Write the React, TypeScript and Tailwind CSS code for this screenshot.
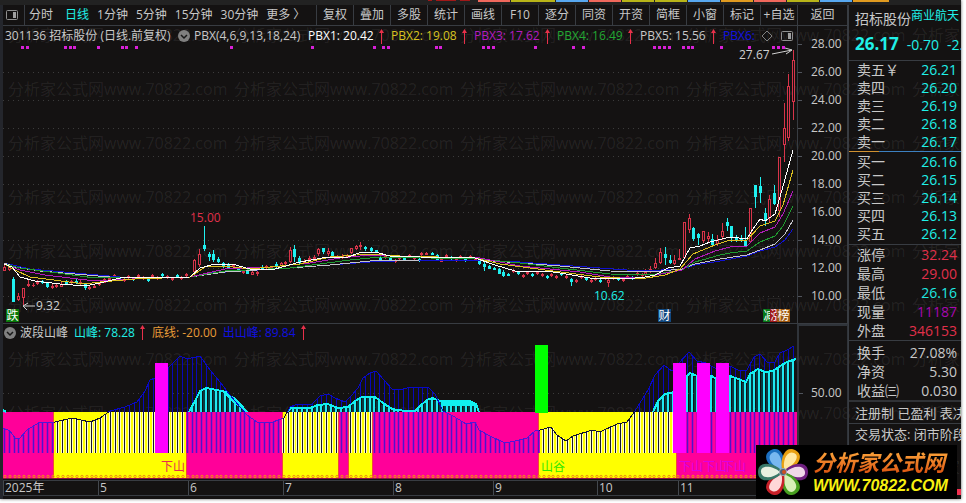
import React from 'react';
import clsx from 'clsx';

type Point = [number, number];
// x, high, body top, body bottom, low, rising
type Candle = [number, number, number, number, number, boolean];

const STEP = 4.81;

const periods = ['分时', '日线', '1分钟', '5分钟', '15分钟', '30分钟', '更多 〉'];
const tools = ['复权', '叠加', '多股', '统计', '画线', 'F10', '逐分', '同资', '开资', '简框', '小窗', '标记', '+自选'];

const indicators = [
  { name: 'PBX1: 20.42', color: 'text-white' },
  { name: 'PBX2: 19.08', color: 'text-[#d8c420]' },
  { name: 'PBX3: 17.62', color: 'text-[#b41cc0]' },
  { name: 'PBX4: 16.49', color: 'text-[#22a832]' },
  { name: 'PBX5: 15.56', color: 'text-[#c8c8c8]' },
];

const prices = ['28.00', '26.00', '24.00', '22.00', '20.00', '18.00', '16.00', '14.00', '12.00', '10.00'];

const sells = [['卖五￥', '26.21'], ['卖四', '26.20'], ['卖三', '26.19'], ['卖二', '26.18'], ['卖一', '26.17']];
const buys = [['买一', '26.16'], ['买二', '26.15'], ['买三', '26.14'], ['买四', '26.13'], ['买五', '26.12']];
const stats = [
  ['涨停', '32.24', 'text-[#e0304a]'],
  ['最高', '29.00', 'text-[#e0304a]'],
  ['最低', '26.16', 'text-[#20e8e0]'],
  ['现量', '11187', 'text-[#a808b0]'],
  ['外盘', '346153', 'text-[#e0304a]'],
];
const ratios = [['换手', '27.08%'], ['净资', '5.30'], ['收益㈢', '0.030']];

const tabs = [
  'w-8 bg-[#f0685c]', 'w-11 bg-[#b8b418]', 'w-8 bg-[#58a8f0]', 'w-8 bg-[#f0685c]', 'w-8 bg-[#b8b418]', 'w-8 bg-[#b8b418]',
  'w-8 bg-[#58a8f0]', 'w-8 bg-[#e09a20]', 'w-8 bg-[#f0685c]', 'w-8 bg-[#b8b418]', 'w-8 bg-[#58a8f0]', 'w-9 bg-[#e09a20]',
];

const signals = [
  22, 27, 65, 70, 74, 98, 122, 126, 136, 231, 312, 374, 383, 388, 436, 440, 483, 488, 493, 535, 573, 583,
  654, 659, 664, 669, 683, 688, 692, 721, 749, 773, 778, 783,
];

const candles: Candle[] = [
  [4, 265, 267, 271, 271, true], [9, 265, 266, 270, 271, true], [13, 277, 279, 302, 302, false],
  [18, 293, 296, 300, 301, true], [23, 288, 288, 298, 305, true], [28, 280, 284, 286, 287, true],
  [33, 283, 285, 286, 287, true], [37, 280, 282, 284, 285, true], [42, 280, 281, 283, 284, false],
  [47, 282, 283, 287, 288, false], [52, 284, 286, 288, 289, true], [56, 284, 285, 287, 288, true],
  [61, 282, 284, 287, 287, true], [66, 280, 281, 284, 284, false], [71, 280, 281, 283, 284, true],
  [76, 279, 281, 283, 284, false], [80, 280, 282, 284, 286, true], [85, 283, 284, 288, 290, false],
  [89, 286, 287, 289, 290, true], [94, 285, 286, 288, 288, true], [99, 282, 283, 285, 286, true],
  [104, 277, 279, 283, 283, true], [109, 276, 278, 280, 281, true],
  [194, 259, 260, 272, 272, true], [199, 249, 254, 265, 267, true], [204, 226, 245, 249, 251, false],
  [209, 252, 254, 257, 261, false], [213, 250, 254, 260, 262, false], [218, 257, 259, 262, 263, false],
  [223, 262, 263, 267, 268, false], [228, 263, 265, 269, 269, false], [247, 270, 271, 274, 274, false],
  [252, 270, 272, 275, 275, true], [257, 270, 272, 274, 276, true], [262, 265, 267, 269, 270, false],
  [266, 265, 266, 268, 269, true], [271, 266, 267, 269, 269, true], [276, 262, 264, 267, 268, false],
  [281, 262, 263, 266, 267, true], [285, 261, 262, 264, 265, true], [290, 247, 250, 262, 263, true],
  [294, 245, 249, 257, 262, false], [299, 256, 258, 263, 264, false], [304, 259, 261, 263, 264, true],
  [309, 256, 258, 260, 261, true], [314, 255, 257, 259, 260, true], [318, 248, 249, 254, 256, true],
  [323, 248, 248, 252, 254, false], [328, 248, 251, 254, 256, true], [332, 251, 252, 258, 258, false],
  [337, 255, 256, 258, 259, true], [342, 254, 256, 258, 259, true], [347, 254, 255, 257, 258, true],
  [351, 248, 248, 253, 254, true], [356, 245, 246, 249, 250, true], [360, 242, 245, 247, 250, true],
  [365, 246, 247, 249, 251, false], [371, 247, 248, 251, 252, false], [376, 250, 250, 252, 253, false],
  [380, 255, 257, 260, 261, false], [421, 252, 253, 255, 256, true], [426, 252, 253, 255, 255, true],
  [432, 252, 253, 255, 255, false], [437, 254, 255, 261, 261, false], [441, 258, 259, 262, 262, true],
  [479, 258, 258, 264, 265, false], [484, 261, 264, 267, 271, false], [489, 265, 266, 269, 269, false],
  [494, 267, 268, 270, 270, false], [499, 268, 269, 274, 274, false], [503, 270, 272, 276, 277, false],
  [508, 273, 274, 276, 276, false], [571, 278, 279, 282, 286, false], [576, 279, 280, 282, 283, true],
  [608, 279, 280, 283, 287, true], [645, 269, 272, 275, 276, true], [650, 266, 269, 271, 273, true],
  [655, 258, 263, 268, 269, true], [660, 248, 252, 263, 264, true], [665, 247, 254, 258, 265, false],
  [670, 255, 260, 263, 264, false], [674, 255, 260, 264, 265, true], [679, 249, 258, 260, 260, true],
  [684, 222, 222, 258, 258, true], [689, 214, 218, 230, 233, true], [693, 227, 228, 239, 241, false],
  [698, 233, 234, 238, 245, false], [703, 231, 231, 241, 243, true], [708, 232, 236, 239, 242, true],
  [712, 234, 239, 245, 247, false], [717, 235, 240, 244, 246, true], [722, 223, 231, 237, 240, true],
  [727, 218, 222, 226, 231, false], [731, 226, 226, 238, 242, false], [736, 235, 237, 240, 242, false],
  [741, 235, 238, 241, 242, false], [745, 227, 240, 246, 246, false], [750, 208, 208, 242, 242, true],
  [755, 185, 185, 197, 208, false], [760, 177, 186, 193, 203, false], [765, 208, 213, 220, 226, false],
  [769, 195, 199, 218, 222, true], [774, 185, 193, 204, 205, false], [779, 157, 157, 211, 217, true],
  [784, 103, 128, 145, 162, true], [788, 74, 86, 138, 141, true], [793, 50, 60, 102, 120, true],
];

// sideways stretches: from x, to x, start y, end y
const flats: [number, number, number, number][] = [
  [114, 190, 278, 277], [233, 245, 268, 270], [385, 420, 259, 258], [446, 478, 258, 259],
  [513, 569, 273, 277], [581, 606, 279, 280], [613, 643, 280, 275],
];

flats.forEach(([from, to, y0, y1]) => {
  for (let x = from, i = 0; x < to; x += STEP, i++) {
    const y = Math.round(y0 + ((y1 - y0) * (x - from)) / (to - from) + ((i * 7) % 5) - 3);
    candles.push([Math.round(x), y - 1, y, y + 2, y + 3, i % 3 !== 1]);
  }
});

const averages: { color: string; points: string }[] = [
  { color: '#1010d0', points: '4,263 30,269 75,273 120,277 190,277 210,273 290,268 330,265 370,262 420,260 480,260 520,262 560,265 600,268 640,271 682,269 695,265 720,261 747,256 760,251 775,247 785,240 793,229' },
  { color: '#c4c4cc', points: '4,263 15,267 40,271 110,277 190,277 225,272 290,268 330,265 370,261 420,260 480,260 520,263 560,266 610,271 650,272 682,269 695,264 720,259 747,255 760,250 775,244 785,234 793,220' },
  { color: '#1f9a30', points: '4,264 20,268 50,272 95,278 190,277 225,271 290,268 320,264 350,260 380,257 480,259 520,263 560,268 610,274 650,275 682,270 695,262 720,255 730,253 747,251 760,242 775,236 783,226 793,206' },
  { color: '#b01cb8', points: '4,264 20,270 45,275 95,281 150,278 190,277 225,269 270,267 310,263 340,258 370,255 420,257 480,258 520,266 580,272 610,277 645,277 682,270 695,259 715,251 730,247 747,246 760,233 775,227 783,214 793,191' },
  { color: '#dcc020', points: '4,264 15,270 30,277 85,284 100,282 135,279 190,277 205,267 225,266 250,269 300,264 330,257 370,254 400,256 475,258 500,264 545,270 600,277 640,279 665,275 680,269 693,254 715,245 730,240 747,240 760,226 775,221 783,205 793,170' },
  { color: '#ffffff', points: '4,264 12,267 20,277 35,281 60,284 85,286 100,283 120,278 190,277 200,268 215,264 232,264 250,269 275,269 300,262 328,257 345,258 362,252 375,252 390,256 420,257 475,258 495,265 515,271 545,271 560,273 590,278 625,279 645,277 655,275 668,268 680,266 690,248 700,246 710,242 730,237 747,239 753,229 760,219 765,221 775,214 782,190 793,150' },
];

const wave: Point[] = [
  [3, 428], [10, 431], [15, 438], [19, 439], [27, 430], [40, 422], [55, 422], [72, 418], [90, 422], [100, 418], [110, 411],
  [125, 407], [137, 402], [145, 391], [150, 380], [155, 378], [168, 368], [180, 356], [187, 359], [200, 356], [210, 370],
  [220, 382], [230, 395], [240, 407], [247, 415], [257, 422], [270, 423], [284, 418], [290, 407], [295, 405], [312, 404],
  [320, 396], [328, 394], [335, 398], [345, 402], [352, 395], [358, 388], [363, 378], [370, 373], [376, 371], [384, 380],
  [392, 389], [400, 390], [410, 387], [428, 387], [435, 394], [443, 411], [453, 416], [463, 422], [466, 424], [475, 422],
  [479, 430], [490, 436], [505, 443], [515, 441], [527, 438], [535, 431], [540, 430], [551, 427], [557, 435], [566, 441],
  [573, 436], [592, 430], [600, 432], [617, 424], [627, 422], [633, 414], [640, 403], [648, 390], [655, 375], [664, 365],
  [672, 371], [679, 363], [689, 352], [697, 361], [706, 363], [720, 371], [730, 366], [740, 371], [747, 370], [754, 357],
  [760, 354], [768, 363], [775, 362], [780, 353], [787, 350], [794, 346],
];

const peaks: Point[][] = [
  [[3, 410], [6, 412]],
  [[189, 412], [195, 401], [200, 391], [206, 388], [222, 391], [226, 392], [230, 396], [240, 404], [247, 412]],
  [
    [288, 411], [291, 408], [310, 408], [318, 405], [328, 404], [338, 408], [348, 407], [355, 401], [362, 397], [375, 397],
    [383, 403], [392, 409], [405, 411], [415, 411], [420, 406], [427, 400], [432, 398], [440, 401], [470, 401], [476, 404], [479, 412],
  ],
  [
    [653, 412], [658, 401], [665, 394], [679, 391], [683, 379], [690, 373], [697, 376], [712, 376], [716, 379], [730, 376],
    [738, 379], [746, 382], [750, 374], [758, 369], [765, 372], [773, 371], [780, 366], [787, 362], [796, 359],
  ],
];

const bands: [number, number, boolean][] = [
  [3, 54, false], [54, 187, true], [187, 283, false], [283, 339, true], [339, 349, false],
  [349, 373, true], [373, 539, false], [539, 677, true], [677, 797, false],
];

const months = [
  { label: '2025年', width: 'w-[95px]' },
  { label: '5', width: 'w-[90px]' },
  { label: '6', width: 'w-[95px]' },
  { label: '7', width: 'w-[110px]' },
  { label: '8', width: 'w-[100px]' },
  { label: '9', width: 'w-[104px]' },
  { label: '10', width: 'w-[81px]' },
  { label: '11', width: 'flex-1' },
];

const xs = Array.from({ length: 165 }, (_, i) => Math.round(4 + i * STEP));

const valueAt = (points: Point[], x: number): number => {
  for (let i = 1; i < points.length; i++) {
    const [x0, y0] = points[i - 1];
    const [x1, y1] = points[i];
    if (x <= x1) return Math.round(y0 + ((y1 - y0) * (x - x0)) / (x1 - x0));
  }
  return points[points.length - 1][1];
};

const isYellow = (x: number) => bands.some(([from, to, yellow]) => yellow && x >= from && x < to);
const toPoints = (points: Point[]) => points.map(p => p.join(',')).join(' ');

const RiseArrow: React.FC = () => (
  <svg className="w-[7px] h-[15px] shrink-0" viewBox="0 0 7 15" fill="#e8304a">
    <path d="M3 3h1v12H3zM3.500 0L6 4H1z" />
  </svg>
);

const Collapse: React.FC = () => (
  <svg className="w-3 h-3 shrink-0" viewBox="0 0 12 12">
    <circle cx="6" cy="6" r="6" fill="#808080" />
    <path d="M3 5l3 3 3-3" fill="none" stroke="#181818" strokeWidth="1.500" />
  </svg>
);

const PaneIcon: React.FC = () => (
  <svg className="w-3 h-3 shrink-0" viewBox="0 0 12 12">
    <rect x="0.500" y="1.500" width="11" height="9" rx="1" fill="none" stroke="#909090" />
    <rect x="7" y="3" width="3" height="6" fill="#a0a0a0" />
  </svg>
);

const Badge: React.FC<{ x: number; text: string; fill: string; width?: number }> = ({ x, text, fill, width = 13 }) => (
  <g>
    <rect x={x} y="309" width={width} height="13" fill={fill} />
    <text x={x + width / 2} y="320" fontSize="12" textAnchor="middle" fill="#fff">{text}</text>
  </g>
);

const PriceChart: React.FC = () => (
  <svg className="block w-full h-[279px]" viewBox="3 44 794 279" shapeRendering="crispEdges">
    {prices.slice(1).map((p, i) => (
      <path key={p} d={`M3 ${72.5 + i * 28}H797`} stroke="#3c3c3c" strokeDasharray="1 4" />
    ))}
    {signals.map(x => <rect key={x} x={x - 1} y="46" width="3" height="3" fill="#d820d8" />)}
    {candles.map(([x, high, top, bottom, low, up]) => {
      const color = up ? '#d8344a' : '#20f0f0';
      return (
        <g key={x}>
          <rect x={x} y={high} width="1" height={low - high} fill={color} />
          <rect x={x - 1} y={top} width="3" height={Math.max(bottom - top, 1)} fill={color} />
          {up && bottom - top > 2 && <rect x={x} y={top + 1} width="1" height={bottom - top - 2} fill="#141212" />}
        </g>
      );
    })}
    {averages.map(a => <polyline key={a.color} points={a.points} fill="none" stroke={a.color} strokeWidth="1" />)}
    <g fill="none" stroke="#d0d0d0" shapeRendering="auto">
      <path d="M772 54L792 50M785 48l7 2-6 4" />
      <path d="M23 306H35M28 303l-5 3 4 4" />
    </g>
    <g fontSize="12">
      <text x="739" y="59" fill="#d0d0d0">27.67</text>
      <text x="36" y="310" fill="#d0d0d0">9.32</text>
      <text x="190" y="222" fill="#e0304a">15.00</text>
      <text x="594" y="300" fill="#20f0e8">10.62</text>
    </g>
    <Badge x={6} text="跌" fill="#087808" />
    <Badge x={658} text="财" fill="#104880" />
    <Badge x={763} text="减" fill="#087818" />
    <Badge x={770} text="涨" fill="#a01818" />
    <Badge x={777} text="榜" fill="#a05810" />
  </svg>
);

const WaveChart: React.FC = () => (
  <svg className="block w-full h-[139px]" viewBox="3 341 794 139" shapeRendering="crispEdges">
    <path d="M3 393.500H797" stroke="#3c3c3c" strokeDasharray="1 4" />
    {bands.map(([from, to, yellow]) => (
      <rect key={from} x={from} y="412" width={to - from} height="67" fill={yellow ? '#ffff00' : '#ff0099'} />
    ))}
    {bands.slice(1).map(([from]) => <rect key={from} x={from - 1} y="412" width="1" height="67" fill="#f04838" />)}
    {xs.map(x => {
      const y = valueAt(wave, x);
      const base = Math.max(y, 412);
      const yellow = isYellow(x);
      return (
        <g key={x}>
          <rect x={x - 1} y={base} width="3" height={453 - base} fill={yellow ? '#ffffc0' : '#d000b4'} />
          <rect x={x} y={base} width="1" height={453 - base} fill={yellow ? '#181830' : '#5014c8'} />
          {y < 412 && <rect x={x} y={y} width="1" height={412 - y} fill="#0808b8" />}
        </g>
      );
    })}
    {peaks.map((peak, i) => (
      <g key={i}>
        {xs.filter(x => x >= peak[0][0] && x <= peak[peak.length - 1][0]).map(x => {
          const y = valueAt(peak, x);
          return (
            <g key={x}>
              <rect x={x - 3} y={y + 1} width="4" height={Math.max(412 - y - 1, 0)} fill="#043c44" />
              <rect x={x - 1} y={y} width="2" height={412 - y} fill="#20e8f0" />
            </g>
          );
        })}
        <polyline points={toPoints(peak)} fill="none" stroke="#10f0f0" strokeWidth="2" />
      </g>
    ))}
    {/* the falling side of the last hump before September stays solid */}
    <path d="M441 400H468L476 403V406H441zM222 391L236 398 247 412 232 402z" fill="#10f0f0" />
    {bands.map(([from, to, yellow]) => (
      <g key={from}>
        <clipPath id={`band-${from}`}><rect x={from} y="412" width={to - from} height="42" /></clipPath>
        <polyline clipPath={`url(#band-${from})`} points={toPoints(wave)} fill="none" stroke={yellow ? '#101030' : '#5018d8'} />
      </g>
    ))}
    <clipPath id="above"><rect x="3" y="341" width="794" height="71" /></clipPath>
    <polyline clipPath="url(#above)" points={toPoints(wave)} fill="none" stroke="#0808c8" />
    {[155, 673, 697, 716].map(x => <rect key={x} x={x} y="363" width="13" height="90" fill="#ff00ff" />)}
    <rect x="535" y="345" width="13" height="68" fill="#00ff00" />
    <g fontSize="12">
      <text x="161" y="471" fill="#e82c50">下山</text>
      <text x="541" y="471" fill="#30e800">山谷</text>
      <text x="679" y="471" fill="#d800e8">下山</text>
      <text x="703" y="471" fill="#d800e8">下山</text>
      <text x="722" y="471" fill="#d800e8">下山</text>
    </g>
    <g fill="none" stroke="#f09010" shapeRendering="auto">
      {xs.map(x => <circle key={x} cx={x + 1} cy="476.500" r="1.200" />)}
    </g>
    <rect x="3" y="478" width="794" height="1" fill="#901040" />
  </svg>
);

const petals = [
  { angle: -30, color: '#1c70c0', inner: '#78b8f0' },
  { angle: 30, color: '#e8a010', inner: '#ffe8a0' },
  { angle: 90, color: '#702080', inner: '#f0d8e8' },
  { angle: 150, color: '#48a020', inner: '#d8f0b8' },
  { angle: 210, color: '#c82028', inner: '#ffd8d8' },
  { angle: 270, color: '#387868', inner: '#e8f0e0' },
];

const Brand: React.FC = () => (
  <a
    href="#home"
    className="absolute right-1 bottom-0 flex items-center gap-1 w-[201px] h-[54px] pl-px bg-black font-bold italic"
  >
    <svg className="w-[52px] h-[52px] shrink-0" viewBox="-26 -26 52 52">
      {petals.map(p => (
        <g key={p.angle} transform={`rotate(${p.angle})`}>
          <path d="M0 0C-9 -7 -13 -25 0 -25S9 -7 0 0z" fill={p.color} />
          <path d="M0 -3C-6 -9 -8 -21 0 -22S6 -9 0 -3z" fill={p.inner} />
        </g>
      ))}
      <circle r="4" fill="#a0a8b0" />
      <circle r="3" fill="#506078" />
      <circle cx="1" r="2" fill="#d05020" />
    </svg>
    <span className="flex flex-col whitespace-nowrap">
      <span className="text-[22px] leading-7 bg-linear-to-b from-[#ffb040] to-[#d84808] bg-clip-text text-transparent">分析家公式网</span>
      <span className="text-base leading-5 text-[#f8f010] font-[Liberation_Sans]">WWW.70822.COM</span>
    </span>
  </a>
);

const Watermark: React.FC = () => (
  <div aria-hidden="true" className="absolute inset-0 overflow-hidden pointer-events-none pt-2 pl-2 text-white/8 text-base">
    {Array.from({ length: 9 }, (_, row) => (
      <div key={row} className="flex h-[54px] items-center whitespace-nowrap">
        {Array.from({ length: 5 }, (_, col) => (
          <span key={col} className="w-[226px] shrink-0">分析家公式网www.70822.com</span>
        ))}
      </div>
    ))}
  </div>
);

const Quote: React.FC<{ rows: string[][]; tall?: boolean; color?: string }> = ({ rows, tall, color = '' }) => (
  <dl className="pl-2 pr-1">
    {rows.map(([label, value, own]) => (
      <div key={label} className={clsx('flex justify-between whitespace-nowrap', tall ? 'leading-[19px]' : 'leading-[18px]')}>
        <dt>{label}</dt>
        <dd className={own || color}>{value}</dd>
      </div>
    ))}
  </dl>
);

const App: React.FC = () => {
  return (
    <div className="bg-white pr-[5px] pb-[5px]">
      <div className="relative overflow-hidden bg-[#141212] text-[#c8c8c8] text-xs shadow-[0_0_3px_#606060] font-[Open_Sans,Noto_Sans_CJK_SC,sans-serif]">
        <Watermark />
        <div className="relative flex h-[5px] bg-[#222222]">
          <div className="w-[478px] shrink-0 flex justify-end pr-2 gap-1">
            <i className="w-1 h-px bg-[#a01818]" />
            <i className="w-5 h-px bg-[#a01818]" />
            <i className="w-2.5 h-px bg-[#a01818]" />
          </div>
          <div className="flex gap-px h-0.5">
            {tabs.map((tab, i) => <i key={i} className={tab} />)}
          </div>
        </div>

        <div className="relative flex">
          <main className="flex-1 min-w-0 border-l-3 border-[#24262c]">
            <nav className="flex h-[21px] border-b border-[#383c42] whitespace-nowrap">
              <button className="w-[22px] pl-[3px] flex items-center border-r border-[#383c42]" aria-label="侧栏"><PaneIcon /></button>
              <div className="flex-1 flex items-center gap-2 pl-1">
                {periods.map((p, i) => (
                  <button key={p} className={clsx(i === 0 && 'mr-1', p === '日线' && 'text-[#20f0e8]')}>{p}</button>
                ))}
              </div>
              {tools.map(t => <button key={t} className="w-[37px] border-l border-[#383c42]">{t}</button>)}
              <button className="w-[51px] border-x border-[#383c42]">返回</button>
            </nav>

            <div className="flex border-b border-[#383c42]">
              <section className="flex-1 min-w-0">
                <header className="flex items-center h-[18px] pt-0.5 pl-0.5 pr-1 whitespace-nowrap">
                  <span className="w-[173px] shrink-0">301136 招标股份 (日线.前复权)</span>
                  <Collapse />
                  <span className="w-[118px] shrink-0 pl-1">PBX(4,6,9,13,18,24)</span>
                  {indicators.map(item => (
                    <span key={item.name} className={clsx('w-[83px] shrink-0 flex items-center gap-1', item.color)}>
                      {item.name}
                      <RiseArrow />
                    </span>
                  ))}
                  <span className="flex-1 text-[#1010e0]">PBX6:</span>
                  <svg className="w-3 h-3 mr-2 shrink-0" viewBox="0 0 12 12"><path d="M6 1l5 5-5 5-5-5z" fill="none" stroke="#808080" /></svg>
                  <PaneIcon />
                </header>
                <PriceChart />
              </section>
              <ol className="w-[51px] pt-1 border-x border-[#383c42]">
                {prices.map(p => (
                  <li key={p} className="flex items-center h-7">
                    <i className="w-1 h-px bg-[#50545c]" />
                    <span className="pl-[9px]">{p}</span>
                  </li>
                ))}
              </ol>
            </div>

            <div className="flex border-b border-[#383c42]">
              <section className="flex-1 min-w-0">
                <header className="flex items-center h-[17px] pl-px whitespace-nowrap">
                  <Collapse />
                  <span className="pl-1">波段山峰</span>
                  <span className="flex items-center gap-1 pl-1.5 text-[#20f0e8]">山峰: 78.28<RiseArrow /></span>
                  <span className="pl-1.5 text-[#e89c38]">底线: -20.00</span>
                  <span className="flex items-center gap-1 pl-1.5 text-[#1010e0]">出山峰: 89.84<RiseArrow /></span>
                </header>
                <WaveChart />
              </section>
              <div className="w-[51px] pt-[59px] border-2 border-r border-[#30343a]">
                <div className="flex items-center">
                  <i className="w-1 h-px bg-[#50545c]" />
                  <span className="pl-2">50.00</span>
                </div>
              </div>
            </div>

            <ol className="flex h-[15px] leading-[14px] text-xs border-b border-[#383c42]">
              {months.map(m => (
                <li key={m.label} className={clsx('pl-px border-l border-[#44484e]', m.width)}>{m.label}</li>
              ))}
            </ol>
            <div className="h-[3px]" />
          </main>

          <aside className="flex flex-col w-[113px] shrink-0 border-l border-[#383c42] text-sm">
            <div className="flex h-6 pl-1.5 whitespace-nowrap overflow-hidden">
              <h1 className="leading-7">招标股份</h1>
              <span className="text-xs leading-[22px] text-[#20f0e8]">商业航天</span>
            </div>
            <div className="flex items-center gap-2 h-[31px] pl-1.5 whitespace-nowrap overflow-hidden text-[#20f0e8]">
              <strong className="text-[17px]">26.17</strong>
              <span>-0.70</span>
              <span>-2.60%</span>
            </div>
            <div className="border-t border-[#383c42]">
              <Quote rows={sells} color="text-[#20f0e8]" />
            </div>
            <div className="flex h-px bg-[#3c80c0]"><i className="w-[30px] bg-[#d09030]" /></div>
            <div className="py-px border-b border-[#383c42]">
              <Quote rows={buys} color="text-[#20f0e8]" />
            </div>
            <div className="border-b border-[#383c42]">
              <Quote rows={stats} tall />
            </div>
            <div className="pt-0.5 border-b-2 border-[#303236]">
              <Quote rows={ratios} tall />
            </div>
            <p className="h-[22px] leading-[22px] pl-1.5 text-[13px] whitespace-nowrap overflow-hidden border-b border-[#383c42]">注册制 已盈利 表决权</p>
            <p className="h-5 leading-5 pl-1.5 text-[13px] whitespace-nowrap overflow-hidden">交易状态: 闭市阶段</p>
            <div className="mt-auto mb-1 h-1.5 w-2 self-end bg-[#f03050]" />
          </aside>
        </div>
        <Brand />
      </div>
    </div>
  );
};

export default App;
